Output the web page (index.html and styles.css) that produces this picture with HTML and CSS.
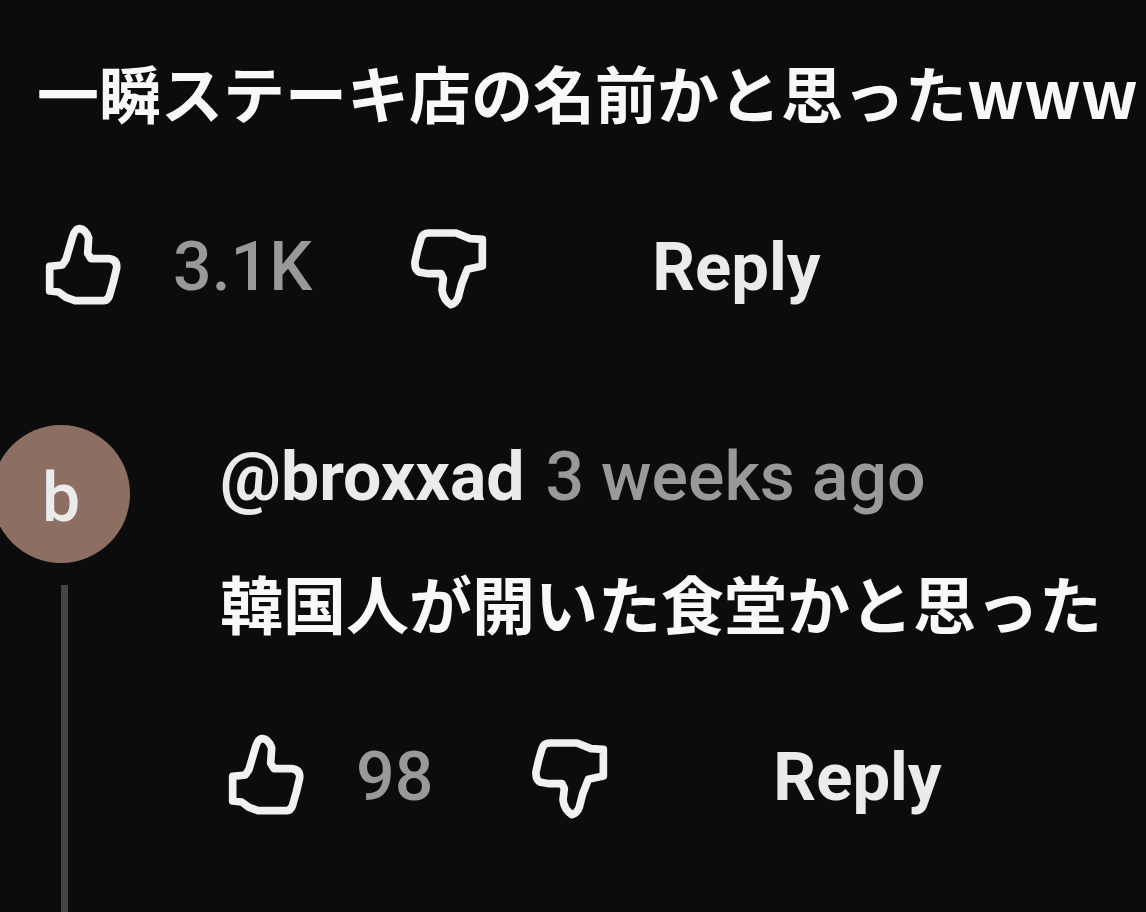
FILE: index.html
```html
<!DOCTYPE html>
<html lang="ja">
<head>
    <meta charset="UTF-8">
    <meta name="viewport" content="width=device-width, initial-scale=1.0">
    <title>Comments</title>
    <link rel="stylesheet" href="styles.css">
</head>
<body>
    <svg class="sprite" aria-hidden="true">
        <symbol id="thumb-up" viewBox="45 30 240 252">
            <path d="M59 169L97 165L108 148L128 80Q136 55 149 56Q167 58 176 84L173 130L183 146H236Q262 149 260 174L250 216L238 258Q233 271 221 272H135L108 262L86 246L59 243Z"/>
        </symbol>
        <symbol id="thumb-down" viewBox="45 30 240 252">
            <path d="M262 88L225 86L183 69H102Q83 69 78 86L68 120L60 155Q58 181 74 187L100 191H138L145 206L141 240Q145 270 168 284Q184 279 190 261L200 222L217 178L262 168Z"/>
        </symbol>
    </svg>

    <main class="comments">
        <article class="comment">
            <p class="comment-text">一瞬ステーキ店の名前かと思った<span class="latin">www</span></p>
            <div class="actions">
                <button type="button" class="icon-btn" aria-label="Like"><svg><use href="#thumb-up"/></svg></button>
                <span class="count">3.1K</span>
                <button type="button" class="icon-btn" aria-label="Dislike"><svg><use href="#thumb-down"/></svg></button>
                <button type="button" class="reply-btn">Reply</button>
            </div>
        </article>

        <article class="reply">
            <div class="reply-side">
                <div class="avatar">b</div>
                <div class="thread-line"></div>
            </div>
            <div class="reply-body">
                <div class="meta">
                    <a href="#" class="author">@broxxad</a>
                    <span class="date">3 weeks ago</span>
                </div>
                <p class="comment-text reply-text">韓国人が開いた食堂かと思った</p>
                <div class="actions">
                    <button type="button" class="icon-btn" aria-label="Like"><svg><use href="#thumb-up"/></svg></button>
                    <span class="count">98</span>
                    <button type="button" class="icon-btn" aria-label="Dislike"><svg><use href="#thumb-down"/></svg></button>
                    <button type="button" class="reply-btn">Reply</button>
                </div>
            </div>
        </article>
    </main>
</body>
</html>
```
FILE: styles.css
```css
* {
    box-sizing: border-box;
}
body {
    margin: 0;
    background-color: #0c0c0c;
    color: #ebebeb;
    font-family: Roboto, "Noto Sans CJK JP", sans-serif;
    overflow-x: hidden;
}
button {
    padding: 0;
    border: none;
    background: none;
    color: inherit;
    font-family: inherit;
    cursor: pointer;
}
.sprite {
    display: none;
}
.comments {
    display: flex;
    flex-direction: column;
    min-height: 100vh;
}
.comment {
    padding: 46px 0 0 37px;
}
.comment-text {
    margin: 0;
    font-family: "Noto Sans CJK JP", sans-serif;
    font-size: 62px;
    font-weight: 700;
    line-height: 92px;
    white-space: nowrap;
    color: #f8f8f6;
}
.latin {
    font-size: 66px;
    line-height: 1;
}
.actions {
    display: flex;
    align-items: center;
    height: 92px;
    margin-top: 78px;
    padding-left: 8px;
}
.icon-btn {
    width: 80px;
    height: 84px;
}
.icon-btn svg {
    display: block;
    width: 80px;
    height: 84px;
    overflow: visible;
    fill: none;
    stroke: #f1f1f1;
    stroke-width: 23;
    stroke-linejoin: round;
}
symbol {
    overflow: visible;
}
.count {
    margin: 0 98px 0 48px;
    padding-top: 10px;
    color: #999;
    font-size: 68px;
    font-weight: 500;
    line-height: 92px;
}
.reply-btn {
    margin-left: 162px;
    padding-top: 10px;
    font-size: 67px;
    font-weight: 700;
    line-height: 92px;
}
.reply {
    display: flex;
    flex: 1;
    margin-top: 117px;
}
.reply-side {
    display: flex;
    flex-direction: column;
    align-items: center;
    flex: none;
    width: 138px;
    margin-left: -8px;
}
.avatar {
    width: 138px;
    height: 138px;
    padding-top: 4px;
    border-radius: 50%;
    background-color: #8d6e63;
    font-size: 68px;
    font-weight: 500;
    line-height: 138px;
    text-align: center;
}
.thread-line {
    flex: 1;
    width: 7px;
    margin: 22px 0 0 6px;
    background-color: #444;
}
.reply-body {
    padding: 6px 0 0 90px;
}
.meta {
    font-size: 68px;
    line-height: 92px;
    white-space: nowrap;
}
.author {
    color: inherit;
    font-weight: 700;
    text-decoration: none;
}
.date {
    margin-left: 4px;
    color: #999;
    font-weight: 500;
}
.reply-text {
    margin-top: 33px;
    font-size: 63px;
}
```
